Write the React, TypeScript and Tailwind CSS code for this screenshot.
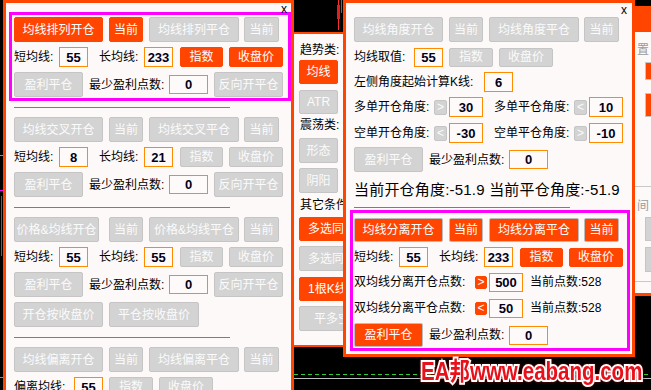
import React from "react";

type BtnProps = { children?: React.ReactNode; on?: boolean; edge?: boolean; className?: string };

const Btn = ({ children, on = false, edge = false, className = "" }: BtnProps) => (
  <div
    className={`flex shrink-0 items-center justify-center overflow-hidden whitespace-nowrap rounded-[2px] border text-[12px] leading-none ${
      on
        ? edge
          ? "border-[#bcbcbc] bg-[#ff4500] text-white"
          : "border-[#ff4500] bg-[#ff4500] text-white"
        : "border-[#c5c5c5] bg-[#d3d3d3] text-[#fbfbfb]"
    } ${className}`}
  >
    {children}
  </div>
);

const Inp = ({ children, className = "" }: { children: React.ReactNode; className?: string }) => (
  <div
    className={`flex shrink-0 items-center justify-center border border-[#ff8c00] bg-[#fffafa] text-[13px] font-bold leading-none text-[#00001a] ${className}`}
  >
    {children}
  </div>
);

const Lbl = ({ children, className = "" }: { children: React.ReactNode; className?: string }) => (
  <span className={`shrink-0 whitespace-nowrap text-[12px] leading-[14px] text-black ${className}`}>{children}</span>
);

const Sep = ({ className = "" }: { className?: string }) => (
  <div className={`h-px w-[216px] bg-[#7b68ee] ${className}`} />
);

type HeadProps = {
  open: string;
  close: string;
  onL?: boolean;
  onR?: boolean;
  edge?: boolean;
  h?: string;
  first?: string;
  second?: string;
};

// row of 开仓 / 当前 / 平仓 / 当前
const HeadRow = ({ open, close, onL = false, onR = false, edge = false, h = "h-[25px]", first = "w-[89px]", second = "ml-[6px]" }: HeadProps) => (
  <div className={`flex ${h}`}>
    <Btn on={onL} edge={edge} className={first}>{open}</Btn>
    <Btn on={onL} edge={edge} className={`w-[34px] ${second}`}>当前</Btn>
    <Btn on={onR} edge={edge} className="ml-[6px] w-[90px]">{close}</Btn>
    <Btn on={onR} edge={edge} className="ml-[5px] w-[35px]">当前</Btn>
  </div>
);

const MaBody = ({ s, l, on = false }: { s: string; l: string; on?: boolean }) => (
  <>
    <div className="mt-[5px] flex h-[20px] items-center">
      <Lbl className="w-[45px]">短均线:</Lbl>
      <Inp className="h-[20px] w-[29px]">{s}</Inp>
      <Lbl className="ml-[11px] w-[45px]">长均线:</Lbl>
      <Inp className="h-[20px] w-[29px]">{l}</Inp>
      <Btn on={on} className="ml-[7px] h-[20px] w-[43px]">指数</Btn>
      <Btn on={on} className="ml-[6px] h-[20px] w-[54px]">收盘价</Btn>
    </div>
    <div className="mt-[5px] flex h-[25px] items-center">
      <Btn className="h-[25px] w-[69px]">盈利平仓</Btn>
      <Lbl className="ml-[6px] w-[80px]">最少盈利点数:</Lbl>
      <Inp className="h-[19px] w-[39px]">0</Inp>
      <Btn className="ml-[6px] h-[25px] w-[69px]">反向开平仓</Btn>
    </div>
  </>
);

const AngleRow = ({ a, sa, va, b, sb, vb, className = "" }: { a: string; sa: string; va: string; b: string; sb: string; vb: string; className?: string }) => (
  <div className={`flex h-[20px] items-center ${className}`}>
    <Lbl className="w-[80px]">{a}</Lbl>
    <Btn className="h-[15px] w-[13px]">{sa}</Btn>
    <Inp className="ml-[2px] h-[20px] w-[34px]">{va}</Inp>
    <Lbl className="ml-[11px] w-[80px]">{b}</Lbl>
    <Btn className="h-[15px] w-[13px]">{sb}</Btn>
    <Inp className="ml-[2px] h-[20px] w-[34px]">{vb}</Inp>
  </div>
);

const GapRow = ({ t, sign, v, className = "" }: { t: string; sign: string; v: string; className?: string }) => (
  <div className={`flex h-[20px] items-center ${className}`}>
    <Lbl className="w-[121px]">{t}</Lbl>
    <Btn on className="h-[13px] w-[12px]">{sign}</Btn>
    <Inp className="ml-[2px] h-[19px] w-[34px]">{v}</Inp>
    <Lbl className="ml-[7px]">当前点数:528</Lbl>
  </div>
);

const Chart = () => (
  <svg className="absolute inset-0" width="651" height="390">
    <rect width="651" height="390" fill="#000" />
    <line x1="294" y1="374.5" x2="651" y2="374.5" stroke="#32cd32" strokeDasharray="4 3" />
    <line x1="294" y1="378.5" x2="651" y2="378.5" stroke="#c0c0c0" />
    <line x1="0" y1="155.5" x2="3" y2="155.5" stroke="#32cd32" />
    <line x1="0" y1="190.5" x2="3" y2="190.5" stroke="#ff00ff" />
    <line x1="1.5" y1="196" x2="1.5" y2="256" stroke="#228b22" />
    <line x1="0" y1="377.5" x2="3" y2="377.5" stroke="#32cd32" />
    <line x1="338.5" y1="0" x2="338.5" y2="30" stroke="#ff3030" />
    <rect x="337" y="5" width="3" height="14" fill="#e02020" />
    <line x1="341.5" y1="0" x2="341.5" y2="13" stroke="#00b000" />
  </svg>
);

export default function App() {
  return (
    <div className="relative h-[390px] w-[651px] overflow-hidden bg-black font-[family-name:'Liberation_Sans','Noto_Sans_CJK_SC',sans-serif]">
      <Chart />

      {/* far right window, mostly hidden */}
      <div className="absolute left-[633px] top-[6px] h-[290px] w-[40px] border-b-[3px] border-[#ff4500] bg-[#fdf9f9]">
        <div className="h-[26px] bg-[#ff4500]" />
        <div className="ml-[4px] mt-[11px] text-[12px] leading-[14px] text-[#9a9a9a]">置</div>
        <div className="ml-[12px] mt-[5px] h-[18px] w-[30px] border border-[#c5c5c5] bg-[#ff4500]" />
        <div className="ml-[12px] mt-[13px] h-[24px] w-[30px] border border-[#c5c5c5] bg-[#ff4500]" />
        <div className="mt-[69px] h-px bg-[#c8c8c8]" />
        <div className="ml-[4px] mt-[12px] text-[12px] leading-[14px] text-[#9a9a9a]">间</div>
        <div className="ml-[12px] mt-[4px] h-[24px] w-[30px] border border-[#c5c5c5] bg-[#d3d3d3]" />
        <div className="ml-[12px] mt-[6px] h-[25px] w-[30px] border border-[#c5c5c5] bg-[#d3d3d3]" />
        <div className="mt-[9px] h-px bg-[#c8c8c8]" />
      </div>

      {/* condition type window */}
      <div className="absolute left-[294px] top-[32px] flex h-[315px] w-[52px] flex-col overflow-hidden border-y-2 border-[#ff4500] bg-[#fdf9f9] pl-[5px]">
        <Lbl className="ml-[1px] mt-[9px]">趋势类:</Lbl>
        <Btn on className="mt-[3px] h-[24px] w-[39px]">均线</Btn>
        <Btn className="mt-[6px] h-[24px] w-[39px]">ATR</Btn>
        <Lbl className="ml-[1px] mt-[4px]">震荡类:</Lbl>
        <Btn className="mt-[6px] h-[25px] w-[39px]">形态</Btn>
        <Btn className="mt-[5px] h-[25px] w-[39px]">阴阳</Btn>
        <Lbl className="ml-[1px] mt-[5px]">其它条件</Lbl>
        <Btn on className="mt-[5px] h-[24px] w-[47px] !justify-start pl-[8px]">多选同时</Btn>
        <Btn className="mt-[5px] h-[25px] w-[47px] !justify-start pl-[8px]">多选同时</Btn>
        <Btn on className="mt-[6px] h-[24px] w-[47px] !justify-start pl-[8px]">1根K线</Btn>
        <Btn className="mt-[5px] h-[25px] w-[47px] !justify-start pl-[14px]">平多空</Btn>
      </div>

      {/* left window */}
      <div className="absolute left-[3px] top-0 h-[400px] w-[291px] border-[3px] border-b-0 border-[#ff4500] bg-[#fdf9f9]">
        <span className="absolute right-[4px] top-[-1px] text-[12px] leading-[14px] text-black">x</span>
        <div className="ml-[3px] mt-[9px] h-[89px] w-[282px] border-[3px] border-[#ff00ff] pl-[2px] pt-[2px]">
          <HeadRow open="均线排列开仓" close="均线排列平仓" onL />
          <MaBody s="55" l="233" on />
        </div>
        <Sep className="ml-[8px] mt-[6px]" />

        <div className="ml-[8px] mt-[9px]">
          <HeadRow open="均线交叉开仓" close="均线交叉平仓" />
          <MaBody s="8" l="21" />
        </div>
        <Sep className="ml-[8px] mt-[10px]" />

        <div className="ml-[8px] mt-[9px]">
          <HeadRow open="价格&均线开仓" close="价格&均线平仓" first="w-[85px]" second="ml-[10px]" />
          <MaBody s="55" l="55" />
          <div className="mt-[5px] flex h-[25px]">
            <Btn className="w-[89px]">开仓按收盘价</Btn>
            <Btn className="ml-[6px] w-[90px]">平仓按收盘价</Btn>
          </div>
        </div>
        <Sep className="ml-[8px] mt-[10px]" />

        <div className="ml-[8px] mt-[9px]">
          <HeadRow open="均线偏离开仓" close="均线偏离平仓" />
          <div className="mt-[5px] flex h-[20px] items-center">
            <Lbl className="w-[60px]">偏离均线:</Lbl>
            <Inp className="h-[20px] w-[29px]">55</Inp>
            <Btn className="ml-[6px] h-[20px] w-[44px]">指数</Btn>
            <Btn className="ml-[6px] h-[20px] w-[54px]">收盘价</Btn>
          </div>
        </div>
      </div>

      {/* right window: angle + separation */}
      <div className="absolute left-[343px] top-0 h-[357px] w-[292px] border-[3px] border-[#ff4500] bg-[#fdf9f9]">
        <span className="absolute right-[5px] top-0 text-[12px] leading-[14px] text-black">x</span>
        <div className="ml-[8px] mt-[14px] flex flex-col">
          <HeadRow open="均线角度开仓" close="均线角度平仓" />
          <div className="mt-[5px] flex h-[20px] items-center">
            <Lbl className="w-[60px]">均线取值:</Lbl>
            <Inp className="h-[19px] w-[29px]">55</Inp>
            <Btn className="ml-[6px] h-[19px] w-[44px]">指数</Btn>
            <Btn className="ml-[6px] h-[19px] w-[54px]">收盘价</Btn>
          </div>
          <div className="mt-[5px] flex h-[20px] items-center">
            <Lbl className="w-[130px]">左侧角度起始计算K线:</Lbl>
            <Inp className="h-[20px] w-[29px]">6</Inp>
          </div>
          <AngleRow className="mt-[5px]" a="多单开仓角度:" sa=">" va="30" b="多单平仓角度:" sb="<" vb="10" />
          <AngleRow className="mt-[6px]" a="空单开仓角度:" sa="<" va="-30" b="空单平仓角度:" sb=">" vb="-10" />
          <div className="mt-[4px] flex h-[25px] items-center">
            <Btn className="h-[25px] w-[69px]">盈利平仓</Btn>
            <Lbl className="ml-[6px] w-[80px]">最少盈利点数:</Lbl>
            <Inp className="h-[19px] w-[39px]">0</Inp>
          </div>
          <div className="mt-[9px] whitespace-nowrap text-[15px] leading-[18px] tracking-[0.2px] text-black">
            当前开仓角度:-51.9 当前平仓角度:-51.9
          </div>
          <Sep className="mt-[8px]" />
        </div>

        <div className="ml-[4px] mt-[2px] h-[141px] w-[280px] border-[3px] border-[#ff00ff] pl-[1px] pt-[5px]">
          <HeadRow open="均线分离开仓" close="均线分离平仓" onL onR edge h="h-[24px]" />
          <div className="mt-[5px] flex h-[20px] items-center">
            <Lbl className="w-[45px]">短均线:</Lbl>
            <Inp className="h-[20px] w-[29px]">55</Inp>
            <Lbl className="ml-[11px] w-[45px]">长均线:</Lbl>
            <Inp className="h-[20px] w-[29px]">233</Inp>
            <Btn on className="ml-[7px] h-[19px] w-[43px]">指数</Btn>
            <Btn on className="ml-[6px] h-[19px] w-[54px]">收盘价</Btn>
          </div>
          <GapRow className="mt-[5px]" t="双均线分离开仓点数:" sign=">" v="500" />
          <GapRow className="mt-[6px]" t="双均线分离平仓点数:" sign="<" v="50" />
          <div className="mt-[5px] flex h-[24px] items-center">
            <Btn on edge className="h-[24px] w-[69px]">盈利平仓</Btn>
            <Lbl className="ml-[6px] w-[80px]">最少盈利点数:</Lbl>
            <Inp className="h-[19px] w-[39px]">0</Inp>
          </div>
        </div>
      </div>

      {/* watermark */}
      <div className="absolute left-[421px] top-[359px] origin-left scale-x-[0.82] whitespace-nowrap font-[family-name:'Liberation_Sans','Noto_Sans_CJK_SC',sans-serif] text-[25px] font-bold leading-none text-[#e8101a] drop-shadow-[0_0_1px_#a00000] [-webkit-text-stroke:4px_white] [paint-order:stroke_fill]">
        EA邦www.eabang.com
      </div>
    </div>
  );
}
